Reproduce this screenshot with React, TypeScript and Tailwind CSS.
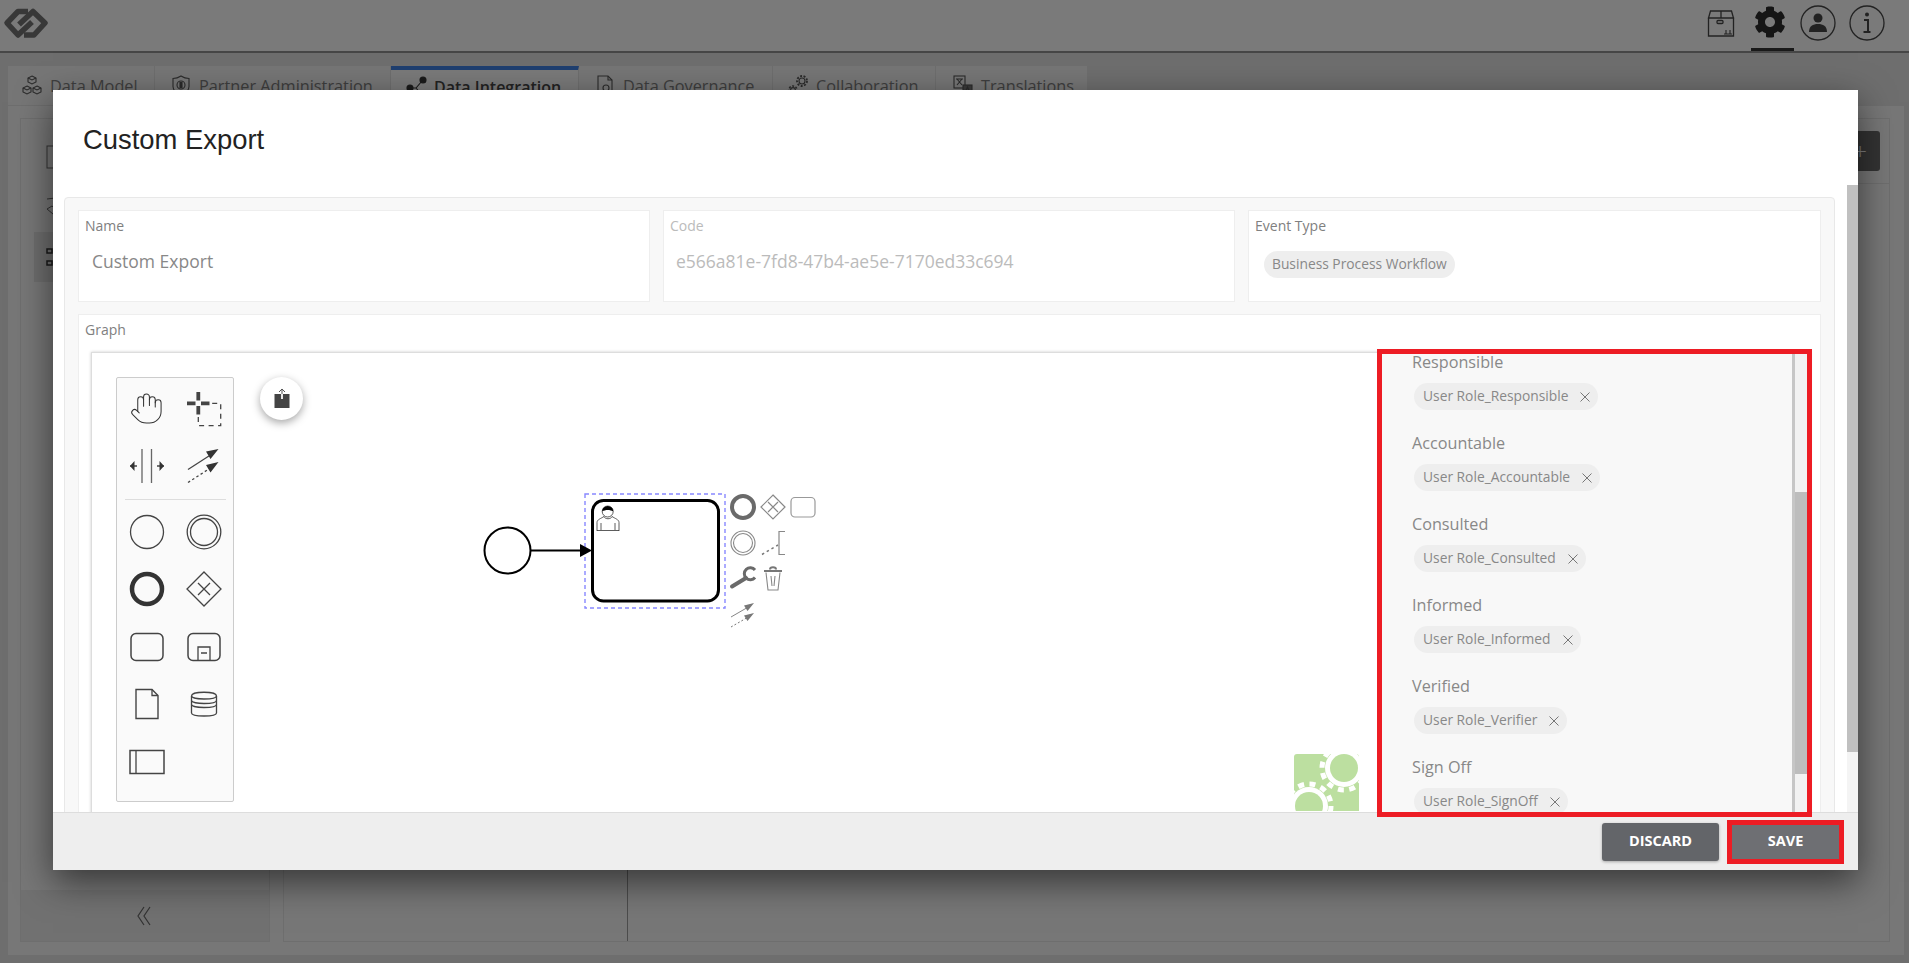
import React from "react";
import { Hand } from "lucide-react";
import { FaCog } from "react-icons/fa";

const font = "font-['Open_Sans',sans-serif]";

function Logo() {
  return (
    <svg width="52" height="44" viewBox="0 0 52 44" className="ml-[1px]">
      <g fill="none" stroke="#707070" strokeWidth="5.500" strokeLinejoin="round">
        <path d="M27 7.500 H17 L6 19 L17 31 L31 18" />
        <path d="M23 31 H33 L44 19 L32 7.500 L18 20.500" />
      </g>
    </svg>
  );
}

function TabIcon({ kind }: { kind: string }) {
  const common = { width: 22, height: 22, viewBox: "0 0 22 22", fill: "none", stroke: "#555", strokeWidth: 1.1 };
  if (kind === "model")
    return (
      <svg {...common}>
        <path d="M11 1l4 2v4l-4 2-4-2V3zM6 11l4 2v4l-4 2-4-2v-4zM16 11l4 2v4l-4 2-4-2v-4z" />
        <path d="M7 3l4 2 4-2M2 13l4 2 4-2M12 13l4 2 4-2" />
      </svg>
    );
  if (kind === "partner")
    return (
      <svg {...common}>
        <path d="M11 1c3 2 6 2.500 8 2.500v8c0 4-4 7-8 9-4-2-8-5-8-9v-8c2 0 5-.5 8-2.500z" />
        <circle cx="11" cy="10" r="4" />
        <rect x="10" y="7.500" width="2" height="5" fill="#555" />
      </svg>
    );
  if (kind === "integration")
    return (
      <svg {...common} stroke="#333">
        <path d="M5 12 L10 12 L16 5 M10 12 L16 19" />
        <circle cx="4" cy="12" r="3" fill="#333" />
        <circle cx="17" cy="4" r="3" fill="#333" />
        <circle cx="17" cy="20" r="3" fill="#333" />
      </svg>
    );
  if (kind === "governance")
    return (
      <svg {...common}>
        <path d="M4 1h10l4 4v15H4z" />
        <path d="M14 1v4h4" />
        <circle cx="12" cy="13" r="3" />
      </svg>
    );
  if (kind === "collab")
    return (
      <svg {...common}>
        <circle cx="15" cy="6" r="3" />
        <circle cx="15" cy="6" r="5" strokeDasharray="2 1.500" strokeWidth="1.800" />
        <circle cx="6" cy="15" r="2.400" />
        <circle cx="6" cy="15" r="4" strokeDasharray="2 1.500" strokeWidth="1.600" />
      </svg>
    );
  return (
    <svg {...common}>
      <rect x="2" y="1" width="11" height="12" />
      <path d="M5 4l5 6M10 4l-5 6M4 4h7" />
      <rect x="11" y="10" width="9" height="10" fill="#767676" />
      <path d="M13 18l2.500-6 2.500 6M14 16h3" />
    </svg>
  );
}

function Tabs() {
  const tabs = [
    { k: "model", t: "Data Model", w: "w-[147px] pl-[13px]" },
    { k: "partner", t: "Partner Administration", w: "w-[236px] pl-[15px]" },
    { k: "integration", t: "Data Integration", w: "w-[188px] pl-[15px]", active: true },
    { k: "governance", t: "Data Governance", w: "w-[194px] pl-[15px]" },
    { k: "collab", t: "Collaboration", w: "w-[163px] pl-[14px]" },
    { k: "translate", t: "Translations", w: "w-[152px] pl-[16px]" },
  ];
  return (
    <div className="flex h-[39px]">
      {tabs.map((x) =>
        x.active ? (
          <div key={x.k} className={`${x.w} flex items-center gap-[6px] border-t-[4px] border-r border-t-[#3f7fe0] border-r-[#dcdcdc] bg-[#f4f4f4] pb-[2px] text-[16px] font-semibold text-[#444]`}>
            <TabIcon kind={x.k} />
            {x.t}
          </div>
        ) : (
          <div key={x.k} className={`${x.w} flex items-center gap-[7px] border-r border-[#dcdcdc] bg-[#ececec] pt-[1px] text-[16.300px] text-[#7c7c7c]`}>
            <TabIcon kind={x.k} />
            {x.t}
          </div>
        ),
      )}
    </div>
  );
}

function Underlay() {
  return (
    <div className={`flex h-screen w-screen flex-col overflow-hidden bg-[#dcdcdc] ${font}`}>
      <header className="flex h-[53px] shrink-0 items-center justify-between border-b-2 border-[#8f8f8f] bg-[#f4f4f4]">
        <Logo />
        <div className="flex h-full items-center">
          <svg width="28" height="28" viewBox="0 0 28 28" fill="none" stroke="#444" strokeWidth="1.300" className="mr-[16px] mb-[6px]">
            <path d="M1.500 9h25v18h-25zM3.500 2h21l2 7h-25zM14 2v7" />
            <rect x="10" y="11.500" width="6" height="3" rx="1" />
            <path d="M17 25h8M19 25v-4M23 25v-4" strokeWidth="1.100" />
          </svg>
          <div className="mr-[6px] flex h-full w-[43px] flex-col items-center border-b-[3px] border-[#333]">
            <FaCog size={32} color="#2a2a2a" className="mt-[6px] mr-[5px]" />
          </div>
          <svg width="36" height="36" viewBox="0 0 36 36" fill="none" stroke="#444" strokeWidth="1.300" className="mr-[13px] mb-[6px]">
            <circle cx="18" cy="18" r="17" />
            <circle cx="18" cy="13" r="4.500" fill="#444" stroke="none" />
            <path d="M9 27c0-6 4-8 9-8s9 2 9 8z" fill="#444" stroke="none" />
          </svg>
          <svg width="36" height="36" viewBox="0 0 36 36" fill="none" stroke="#444" strokeWidth="1.300" className="mr-[24px] mb-[6px]">
            <circle cx="18" cy="18" r="17" />
            <circle cx="18" cy="9.500" r="2" fill="#444" stroke="none" />
            <path d="M15 15h4v12M14.500 27h7" strokeWidth="2" />
          </svg>
        </div>
      </header>
      <main className="flex min-h-0 flex-1 flex-col pt-[13px] pr-[5px] pb-[8px] pl-[8px]">
        <Tabs />
        <div className="mt-[1px] flex min-h-0 flex-1 gap-[13px] bg-[#eeeeee] pt-[12px] pr-[14px] pb-[13px] pl-[12px]">
          <aside className="flex w-[250px] flex-col border border-[#dddddd] bg-[#eeeeee]">
            <div className="flex-1 pt-[13px]">
              <div className="flex h-[50px] items-center pl-[25px]">
                <svg width="24" height="24" viewBox="0 0 24 24" fill="none" stroke="#666"><rect x="1" y="1" width="22" height="22" /></svg>
              </div>
              <div className="flex h-[50px] items-center pl-[25px]">
                <svg width="24" height="24" viewBox="0 0 24 24" fill="none" stroke="#666"><path d="M1 4l16-2M1 14l6 5 4-4-5-4z" /></svg>
              </div>
              <div className="ml-[13px] flex h-[50px] items-center bg-[#dddddd] pl-[12px]">
                <svg width="24" height="24" viewBox="0 0 24 24" fill="none" stroke="#333" strokeWidth="1.500"><rect x="1" y="4" width="5" height="4" /><rect x="1" y="16" width="5" height="4" /></svg>
              </div>
            </div>
            <div className="flex h-[51px] items-center justify-center bg-[#e2e2e2]">
              <svg width="16" height="24" viewBox="0 0 16 24" fill="none" stroke="#666" strokeWidth="1.200"><path d="M7 3l-6 9 6 9M13 3l-6 9 6 9" /></svg>
            </div>
          </aside>
          <section className="flex min-w-0 flex-1 flex-col border border-[#dddddd]">
            <div className="flex h-[65px] items-center justify-end border-b border-[#dddddd] pr-[9px]">
              <div className="flex h-[40px] w-[60px] items-center justify-end rounded-[3px] bg-[#666666] pr-[13px] text-[24px] font-light text-white">+</div>
            </div>
            <div className="w-[344px] flex-1 border-r border-[#999999]" />
          </section>
        </div>
      </main>
    </div>
  );
}

function Ico({ children }: { children: React.ReactNode }) {
  return (
    <div className="flex h-[57.5px] w-[57px] items-center justify-center">
      <svg width="40" height="40" viewBox="-20 -20 40 40" fill="none" stroke="#444" strokeWidth="1.300">
        {children}
      </svg>
    </div>
  );
}

function Toolbar() {
  return (
    <div className="absolute top-[24px] left-[24px] h-[425px] w-[118px] rounded-[2px] border border-[#cccccc] bg-[#fafafa] pt-[2px] pl-[1px]">
      <div className="grid grid-cols-2">
        <div className="flex h-[57.5px] w-[57px] items-center justify-center">
          <Hand size={35} strokeWidth={0.7} color="#333" />
        </div>
        <Ico>
          <path d="M-5.700 -17v8.500M-5.700 -3v8.500M-17 -5.700h8.500M-3 -5.700h8.500" strokeWidth="3.800" />
          <path d="M-5.700 8v8.700H16.700V-5.700H8" strokeWidth="1.300" strokeDasharray="5 4.500" />
        </Ico>
        <Ico>
          <path d="M-5 -17V17M4.500 -17V17" stroke="#666" />
          <path d="M-17 0h7M10 0h7" stroke="#444" strokeWidth="1.500" />
          <path d="M-17 0l4.500-5v10zM17 0l-4.500-5v10z" fill="#333" stroke="none" />
        </Ico>
        <Ico>
          <path d="M-16 3.500L8 -12" />
          <path d="M-16 16.500L8 1" strokeDasharray="2.500 2.500" />
          <path d="M14.500 -17L2 -14.500l4.500 7.500zM14.500 -4L2 -1l4.500 7.500z" fill="#333" stroke="none" />
        </Ico>
      </div>
      <div className="mx-[7px] mt-[4px] mb-[3px] h-px bg-[#dddddd]" />
      <div className="grid grid-cols-2">
        <Ico><circle r="16.500" /></Ico>
        <Ico><circle r="16.800" /><circle r="13.500" /></Ico>
        <Ico><circle r="15" strokeWidth="4.500" stroke="#333" /></Ico>
        <Ico><path d="M0 -17L17 0 0 17 -17 0z" /><path d="M-6 -6L6 6M6 -6L-6 6" /></Ico>
        <Ico><rect x="-16" y="-13.500" width="32" height="27" rx="5" strokeWidth="1.500" /></Ico>
        <Ico>
          <rect x="-16" y="-13.500" width="32" height="27" rx="5" strokeWidth="1.500" />
          <path d="M-6 13V0H6V13" />
          <path d="M-3 6h6" strokeWidth="1.500" />
        </Ico>
        <Ico><path d="M-11 -14.500H5L11 -8.500V14.500H-11z" strokeWidth="1.400" /><path d="M5 -14.500V-8.500H11" /></Ico>
        <Ico>
          <path d="M-12.500 -8c0-5 25-5 25 0v17c0 4-25 4-25 0z" />
          <path d="M-12.500 -8c0 4 25 4 25 0M-12.500 -3.500c0 4 25 4 25 0M-12.500 0.500c0 4 25 4 25 0" />
        </Ico>
        <Ico><rect x="-17" y="-11.500" width="34" height="23" strokeWidth="1.500" /><path d="M-11 -11.500V11.500" /></Ico>
      </div>
    </div>
  );
}

function Diagram() {
  return (
    <svg width="350" height="150" viewBox="480 490 350 150" fill="none" className="absolute top-[137px] left-[388px]">
      <rect x="585" y="494" width="140" height="114" stroke="#8888ff" strokeWidth="1.400" strokeDasharray="4 3" />
      <circle cx="507.500" cy="550.500" r="23" stroke="#000" strokeWidth="2" fill="#fff" />
      <path d="M530 550.500H582" stroke="#000" strokeWidth="2" />
      <path d="M592 550.500L580 544V557z" fill="#000" />
      <rect x="592.500" y="500.500" width="126" height="100.500" rx="11" stroke="#000" strokeWidth="3" />
      <path d="M597 531V522.500c0-3 4-4 7-6M619 531V522.500c0-3-4-4-7-6M597 530.500H619M601 523V530M615 523V530" stroke="#333" strokeWidth="0.800" />
      <path d="M604 516.500c1 3 7 3 8 0" stroke="#333" strokeWidth="0.800" />
      <circle cx="607.700" cy="511.500" r="5.500" fill="#fff" stroke="#333" strokeWidth="0.800" />
      <path d="M602.200 511.500a5.500 5.500 0 0111 0c-3-2-8-2-11 0z" fill="#000" />
      <circle cx="743" cy="507" r="11" stroke="#6a6a6a" strokeWidth="4" />
      <path d="M773 495L785 507 773 519 761 507z" stroke="#888" strokeWidth="1.200" />
      <path d="M768 502L778 512M778 502L768 512" stroke="#888" strokeWidth="1.200" />
      <rect x="791" y="497.500" width="24" height="19.500" rx="4" stroke="#999" strokeWidth="1.200" />
      <circle cx="743" cy="543" r="12" stroke="#888" strokeWidth="1.100" />
      <circle cx="743" cy="543" r="9.500" stroke="#888" strokeWidth="1.100" />
      <path d="M762 554.500L778 545" stroke="#777" strokeWidth="1.500" strokeDasharray="2.500 3" />
      <path d="M785 531.500H779V554.500H785" stroke="#888" strokeWidth="1.200" />
      <path d="M732 586.500L746 578" stroke="#6a6a6a" strokeWidth="4" strokeLinecap="round" />
      <path d="M755 570a6 6 0 100 7.500" stroke="#6a6a6a" strokeWidth="3" />
      <path d="M764 571H782M770 569.500c0-3 6-3 6 0" stroke="#777" strokeWidth="2" />
      <path d="M766 572.500L768 590H778L780 572.500M771 576L772 586M775 576L774 586" stroke="#888" strokeWidth="1.100" />
      <path d="M731 617L750 606" stroke="#777" strokeWidth="0.900" />
      <path d="M731 627L750 616" stroke="#777" strokeWidth="1" strokeDasharray="2 2" />
      <path d="M754 603L744 605.500 747.500 611zM754 613L744 615.500 747.500 621z" fill="#777" />
    </svg>
  );
}

function GreenMark() {
  return (
    <svg width="65" height="57" viewBox="0 0 65 57" className="absolute top-[401px] left-[1202px]">
      <rect width="65" height="65" rx="3" fill="#bcdfa0" />
      <circle cx="50" cy="14" r="19" fill="#fff" />
      <circle cx="50" cy="14" r="22" fill="none" stroke="#fff" strokeWidth="5" strokeDasharray="6 5.500" />
      <circle cx="50" cy="14" r="14" fill="#bcdfa0" />
      <circle cx="15" cy="52" r="19" fill="#fff" />
      <circle cx="15" cy="52" r="22" fill="none" stroke="#fff" strokeWidth="5" strokeDasharray="6 5.500" />
      <circle cx="15" cy="52" r="14" fill="#bcdfa0" />
    </svg>
  );
}

function Chip({ text }: { text: string }) {
  return (
    <div className="ml-[2px] flex h-[27px] w-fit items-center rounded-full bg-[#eeeeee] pr-[8px] pl-[9px] text-[13.800px] text-[#888888]">
      <span>{text}</span>
      <svg width="10" height="10" viewBox="0 0 10 10" stroke="#777" strokeWidth="1" className="ml-[12px]">
        <path d="M0.500 0.500L9.500 9.500M9.500 0.500L0.500 9.500" />
      </svg>
    </div>
  );
}

function PropsPanel() {
  const items = [
    ["Responsible", "User Role_Responsible"],
    ["Accountable", "User Role_Accountable"],
    ["Consulted", "User Role_Consulted"],
    ["Informed", "User Role_Informed"],
    ["Verified", "User Role_Verifier"],
    ["Sign Off", "User Role_SignOff"],
  ];
  return (
    <div className="flex w-[430px] shrink-0 overflow-hidden bg-[#f8f8f8]">
      <div className="flex-1 pl-[35px]">
        <div className="flex flex-col gap-[24px]">
          {items.map(([l, c]) => (
            <div key={l}>
              <div className="mb-[12px] h-[18px] text-[16.200px] leading-[18px] text-[#888888]">{l}</div>
              <Chip text={c} />
            </div>
          ))}
        </div>
      </div>
      <div className="w-[15px] shrink-0 border-l-[3px] border-[#c6c6c6] bg-[#f2f2f2]">
        <div className="mt-[139px] h-[282px] bg-[#bdbdbd]" />
      </div>
    </div>
  );
}

function Field({ label, children, disabled }: { label: string; children: React.ReactNode; disabled?: boolean }) {
  return (
    <div className="h-[92px] border border-[#eeeeee] bg-white pt-[5px] pl-[6px]">
      <div className={`h-[20px] text-[14px] leading-[20px] ${disabled ? "text-[#bbbbbb]" : "text-[#808080]"}`}>{label}</div>
      {children}
    </div>
  );
}

function Modal() {
  return (
    <div className={`absolute top-[90px] left-[53px] flex h-[780px] w-[1805px] flex-col bg-white shadow-[0_12px_34px_rgba(0,0,0,0.55)] ${font}`}>
      <div className="flex h-[95px] shrink-0 items-center pt-[4px] pl-[30px] font-['Liberation_Sans',sans-serif] text-[27.400px] text-[#222222]">Custom Export</div>
      <div className="flex min-h-0 flex-1">
        <div className="min-w-0 flex-1 overflow-hidden pt-[12px] pr-[12px] pl-[11px]">
          <div className="rounded-[4px] border border-[#e8e8e8] bg-[#f8f8f8] px-[13px] pt-[12px] pb-[40px]">
            <div className="grid grid-cols-[572px_572px_573px] gap-[13px]">
              <Field label="Name">
                <div className="mt-[14px] pl-[7px] text-[17.500px] leading-[22px] text-[#888888]">Custom Export</div>
              </Field>
              <Field label="Code" disabled>
                <div className="mt-[14px] pl-[6px] text-[17.500px] leading-[22px] text-[#bbbbbb]">e566a81e-7fd8-47b4-ae5e-7170ed33c694</div>
              </Field>
              <Field label="Event Type">
                <div className="mt-[15px] ml-[9px] flex h-[27px] w-fit items-center rounded-full bg-[#eeeeee] px-[8px] text-[13.800px] text-[#888888]">Business Process Workflow</div>
              </Field>
            </div>
            <div className="mt-[12px] h-[560px] border border-[#eeeeee] bg-white pt-[5px] pr-[10px] pl-[12px]">
              <div className="mb-[12px] h-[20px] text-[14px] leading-[20px] text-[#808080]">
                <span className="-ml-[6px]">Graph</span>
              </div>
              <div className="relative flex h-[500px] border border-[#dddddd] pr-[2px] shadow-[0_0_3px_rgba(0,0,0,0.2)]">
                <div className="min-w-0 flex-1">
                  <Toolbar />
                  <div className="absolute top-[24px] left-[168px] flex h-[43px] w-[43px] items-center justify-center rounded-full bg-white shadow-[0_3px_8px_rgba(0,0,0,0.35)]">
                    <svg width="18" height="22" viewBox="0 0 18 22">
                      <rect x="1.500" y="6" width="15" height="14" fill="#444" />
                      <path d="M9 1V11M6 4L9 1 12 4" fill="none" stroke="#fafafa" strokeWidth="1.800" />
                      <path d="M9 1V6M6 4L9 1 12 4" fill="none" stroke="#555" strokeWidth="1" />
                    </svg>
                  </div>
                  <Diagram />
                  <GreenMark />
                </div>
                <PropsPanel />
              </div>
            </div>
          </div>
        </div>
        <div className="w-[11px] shrink-0 bg-[#f4f4f4]">
          <div className="h-[567px] bg-[#c0c0c0]" />
        </div>
      </div>
      <div className="flex h-[58px] shrink-0 items-center justify-end gap-[8px] border-t border-[#dddddd] bg-[#eeeeee] pr-[14px]">
        <button className="h-[38px] w-[117px] rounded-[3px] bg-[#636569] pb-[2px] text-[14.500px] font-bold text-white shadow-[0_1px_3px_rgba(0,0,0,0.3)]">DISCARD</button>
        <button className="h-[44px] w-[117px] border-[5px] border-[#ed1c24] bg-[#6e6f73] pb-[2px] text-[14.500px] font-bold text-white">SAVE</button>
      </div>
      <div className="pointer-events-none absolute top-[259px] left-[1324px] h-[468px] w-[435px] border-[5px] border-[#ed1c24]" />
    </div>
  );
}

export default function App() {
  return (
    <div className="relative h-screen w-screen overflow-hidden">
      <Underlay />
      <div className="absolute inset-0 bg-black/50" />
      <Modal />
    </div>
  );
}
